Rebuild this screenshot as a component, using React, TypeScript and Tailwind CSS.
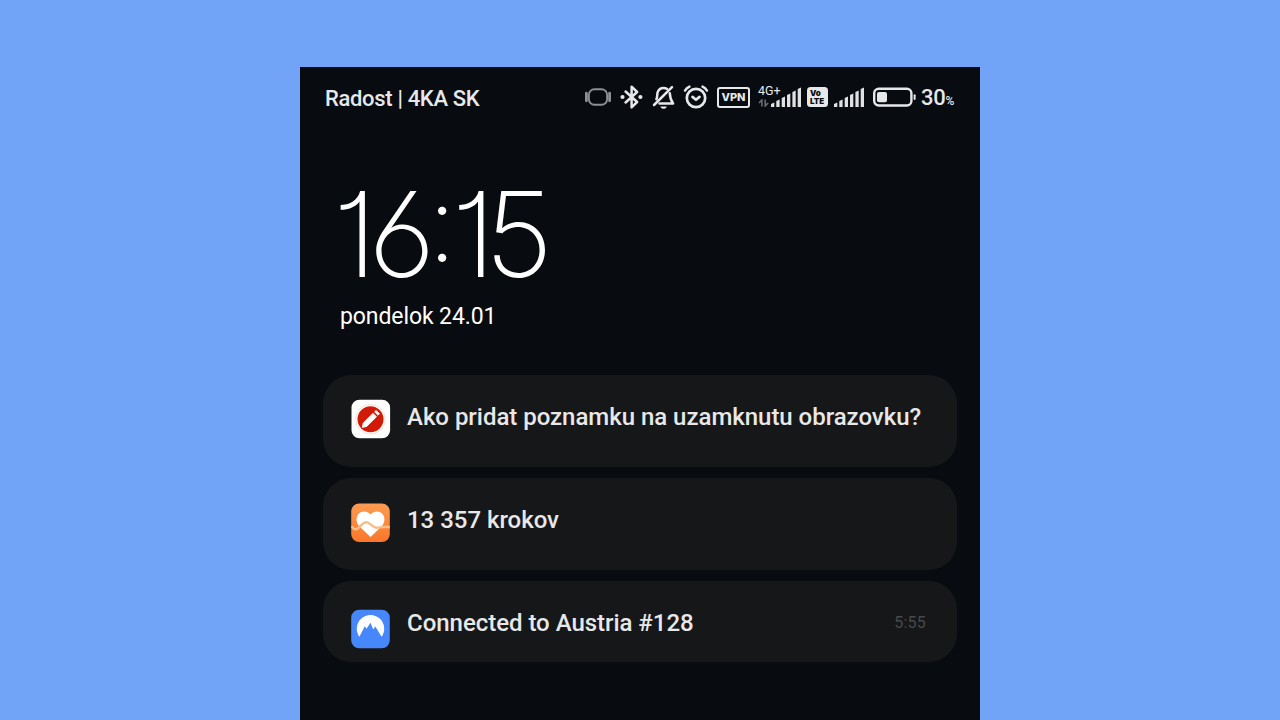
import type { ReactNode } from 'react';
import { clsx } from 'clsx';

interface NotificationProps {
  icon: ReactNode;
  title: string;
  time?: string;
  className?: string;
  titleClassName?: string;
}

function VibrateIcon() {
  return (
    <svg width="26" height="24" viewBox="0 0 26 24" fill="none" stroke="#8e9095">
      <rect x="3.9" y="4.2" width="18.2" height="15.6" rx="5.5" strokeWidth="1.9" />
      <path d="M1.4 8.2v7.6M24.6 8.2v7.6" strokeWidth="2.8" strokeLinecap="round" />
    </svg>
  );
}

function BluetoothIcon() {
  return (
    <svg width="24" height="24" viewBox="0 0 24 24" fill="none" stroke="#e6e8ea" strokeWidth="2.5">
      <path d="M5.6 6.5 17.1 17 11.6 22.3V1.7L17.1 7 5.6 17.5" strokeLinejoin="round" strokeLinecap="round" />
      <circle cx="2.5" cy="12" r="2.1" fill="#e6e8ea" stroke="none" />
      <circle cx="20.4" cy="12" r="2.1" fill="#e6e8ea" stroke="none" />
    </svg>
  );
}

function BellOffIcon() {
  return (
    <svg width="24" height="24" viewBox="0 0 24 24" fill="none" stroke="#e6e8ea" strokeWidth="2.5">
      <path d="M4.4 14.2C5.6 11.8 5 9.5 5.6 7.4 6.6 4.3 8.8 2.9 11.5 2.9c1.4 0 2.6.3 3.6 1" strokeLinecap="round" />
      <path d="M17.8 8.2c.1 4.4.8 6.7 3.3 10.2H7.5" strokeLinecap="round" strokeLinejoin="round" />
      <path d="M20 2.1 2 20" strokeLinecap="round" />
      <path d="M8.4 21.4h6.4c-.7 1.8-1.7 2.4-3.2 2.4s-2.5-.6-3.2-2.4Z" fill="#e6e8ea" stroke="none" />
    </svg>
  );
}

function AlarmIcon() {
  return (
    <svg width="26" height="24" viewBox="0 0 26 24" fill="none" stroke="#e6e8ea" strokeWidth="2.7" strokeLinecap="round">
      <circle cx="13" cy="13" r="9.2" />
      <path d="m9.5 11.9 3.5 2.8 3.5-2.8" strokeLinejoin="round" />
      <path d="M2 5.6C3 3.8 4.5 2.4 6.5 1.6M24 5.6C23 3.8 21.5 2.4 19.5 1.6" strokeWidth="2.4" />
    </svg>
  );
}

const bars = [
  { x: 0, h: 4 },
  { x: 5.3, h: 7 },
  { x: 10.7, h: 10 },
  { x: 16, h: 13 },
  { x: 21.4, h: 16 },
  { x: 26.7, h: 19 },
];

function SignalIcon() {
  return (
    <svg width="30" height="20" viewBox="0 0 30 20" fill="#dfe1e3">
      {bars.map((bar) => (
        <path key={bar.x} d={`M${bar.x} ${21 - bar.h}l3.3-1.6V19.9h-3.3Z`} />
      ))}
    </svg>
  );
}

function DataArrowsIcon() {
  return (
    <svg width="11" height="8" viewBox="0 0 11 8" fill="none" stroke="#686b70" strokeWidth="1.6">
      <path d="M3.9 7.5V1L1 4M7.2.5V7l2.9-3" />
    </svg>
  );
}

function BatteryIcon() {
  return (
    <svg width="43" height="20" viewBox="0 0 43 20">
      <rect x="1.2" y="1.7" width="37.2" height="16.8" rx="4.5" fill="none" stroke="#e6e8ea" strokeWidth="2.4" />
      <rect x="4" y="5" width="10" height="10.2" rx="2" fill="#e6e8ea" />
      <rect x="40.6" y="7.3" width="2" height="5.6" rx="1" fill="#e6e8ea" />
    </svg>
  );
}

function NotesAppIcon() {
  return (
    <svg width="40" height="40" viewBox="0 0 40 40">
      <rect x=".5" y=".7" width="38.6" height="38.6" rx="8" fill="#fefefe" />
      <circle cx="19.5" cy="20.3" r="14.8" fill="none" stroke="#f0d9d0" strokeWidth=".8" />
      <circle cx="19.5" cy="20.3" r="13" fill="#d11b06" />
      <path d="m11.4 28.3.9-4.3 9.7-9.6 3.4 3.4-9.7 9.6Z" fill="#fff" stroke="#fff" strokeWidth="1" strokeLinejoin="round" />
      <path d="m23.7 12.9 1.4-1.4 3.3 3.3-1.4 1.4Z" fill="#fff" stroke="#fff" strokeWidth="1" strokeLinejoin="round" />
    </svg>
  );
}

function HealthAppIcon() {
  return (
    <svg width="40" height="40" viewBox="0 0 40 40">
      <defs>
        <linearGradient id="health" x1="0" y1="0" x2="0" y2="1">
          <stop offset="0" stopColor="#fb9c52" />
          <stop offset="1" stopColor="#fb7629" />
        </linearGradient>
      </defs>
      <rect x=".2" y=".5" width="38.6" height="38.6" rx="8" fill="url(#health)" />
      <path d="M19.5 34.1 8.5 23.6C4.9 19.8 4.6 14 7.8 10.8c3.2-3.3 8.4-3 11.7.6 3.3-3.6 8.5-3.9 11.7-.6 3.2 3.2 2.9 9-.7 12.8Z" fill="#fff" />
      <path d="M.5 23.2c2.2 3.6 5 4 7.3 1.4 2.6-2.8 5.3-6.4 8.7-5.2 3.3 1.2 5 4.9 9 5.4 2.5.2 4-.8 6-.8h7.3" fill="none" stroke="#fbbd85" strokeWidth="2.4" />
    </svg>
  );
}

function VpnAppIcon() {
  return (
    <svg width="40" height="40" viewBox="0 0 40 40">
      <rect x=".2" y=".7" width="38.6" height="38.6" rx="8" fill="#4687fb" />
      <path
        d="M8.4 27.8a13.7 13.7 0 1 1 22.2 0l-6.3-10.4-2 3.2-2.9-6.8-3.8 6-1.8-2.6Z"
        fill="#fff"
      />
    </svg>
  );
}

function StatusBar() {
  return (
    <header className="flex h-[60px] items-center pr-[26px] pl-[25px] text-[#e6e8ea]">
      <span className="mt-0.5 text-[22px] font-medium tracking-[-0.33px]">Radost | 4KA SK</span>
      <div className="ml-auto flex items-center">
        <VibrateIcon />
        <div className="ml-[9px]">
          <BluetoothIcon />
        </div>
        <div className="ml-2">
          <BellOffIcon />
        </div>
        <div className="ml-[7px]">
          <AlarmIcon />
        </div>
        <div className="ml-2 flex h-[21px] w-[33px] items-center justify-center rounded-[3px] border-[2.5px] border-[#e6e8ea] pt-px font-['Inter',sans-serif] text-[11px] leading-none font-extrabold">
          VPN
        </div>
        <div className="ml-2 flex h-6 w-[43px] items-end">
          <div className="flex h-6 w-[13px] flex-col justify-between pb-0.5">
            <span className="text-[12.5px] leading-[12px] whitespace-nowrap">4G+</span>
            <DataArrowsIcon />
          </div>
          <div className="mb-0.5">
            <SignalIcon />
          </div>
        </div>
        <div className="ml-[6px] flex h-5 w-[21px] flex-col justify-center rounded-[3.5px] bg-[#e6e8ea] pl-[3px] font-['Inter',sans-serif] text-[8px] leading-[8.5px] font-black text-[#090c10]">
          <span>Vo</span>
          <span>LTE</span>
        </div>
        <div className="ml-[6px]">
          <SignalIcon />
        </div>
        <div className="ml-[9px]">
          <BatteryIcon />
        </div>
        <div className="mt-0.5 ml-[5px] flex w-[33px] items-baseline font-medium">
          <span className="text-[22px] leading-6 tracking-[-0.3px]">30</span>
          <span className="text-[12px]">%</span>
        </div>
      </div>
    </header>
  );
}

function Clock() {
  return (
    <section className="mt-[52px] pl-[33px] text-white">
      <div className="flex h-[110px] items-center font-['Inter',sans-serif] text-[118px] leading-[110px] font-extralight [font-feature-settings:'cv01','cv03']">
        <span className="tracking-[-9px]">16</span>
        <span className="mb-[23px] w-[25px] pl-px text-[106px] tracking-[-8px]">:</span>
        <span className="tracking-[-11px]">15</span>
      </div>
      <p className="mt-3 pl-[7px] text-[23px] leading-8 tracking-[-0.1px]">pondelok 24.01</p>
    </section>
  );
}

function Notification({ icon, title, time, className, titleClassName }: NotificationProps) {
  return (
    <article className={clsx('flex rounded-[28px] bg-[#161719] pr-[31px] pl-7', className)}>
      {icon}
      <h2
        className={clsx(
          'ml-4 text-2xl leading-8 font-medium tracking-[-0.03px] whitespace-nowrap text-[#e8e8e8]',
          titleClassName,
        )}
      >
        {title}
      </h2>
      {time && <time className="-mt-0.5 ml-auto text-base leading-8 tracking-[0.2px] text-[#48494b]">{time}</time>}
    </article>
  );
}

export default function App() {
  return (
    <div className="flex h-screen justify-center overflow-hidden bg-[#71a4f7] pt-[67px] font-['Roboto',sans-serif]">
      <main className="w-[680px] bg-[#080b0f]">
        <StatusBar />
        <Clock />
        <div className="mt-[42px] flex flex-col gap-[11px] px-[23px]">
          <Notification
            icon={<NotesAppIcon />}
            title="Ako pridat poznamku na uzamknutu obrazovku?"
            className="h-[92px] pt-6"
            titleClassName="mt-0.5"
          />
          <Notification
            icon={<HealthAppIcon />}
            title="13 357 krokov"
            className="h-[92px] pt-[25px]"
            titleClassName="mt-px"
          />
          <Notification
            icon={<VpnAppIcon />}
            title="Connected to Austria #128"
            time="5:55"
            className="h-[81px] pt-7"
            titleClassName="-mt-0.5"
          />
        </div>
      </main>
    </div>
  );
}
